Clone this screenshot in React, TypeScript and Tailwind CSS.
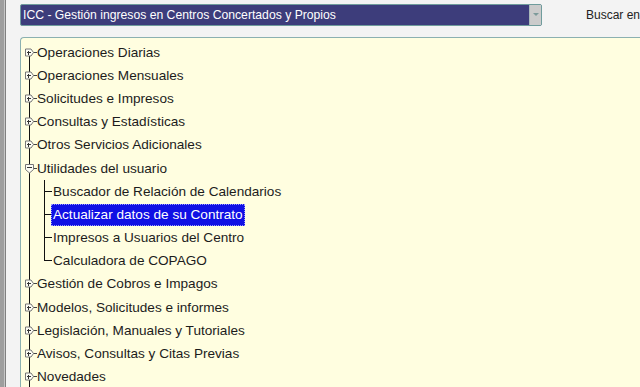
import React from "react";

type Node = { label: string; open?: boolean; children?: string[] };

const tree: Node[] = [
  { label: "Operaciones Diarias" },
  { label: "Operaciones Mensuales" },
  { label: "Solicitudes e Impresos" },
  { label: "Consultas y Estadísticas" },
  { label: "Otros Servicios Adicionales" },
  {
    label: "Utilidades del usuario",
    open: true,
    children: [
      "Buscador de Relación de Calendarios",
      "Actualizar datos de su Contrato",
      "Impresos a Usuarios del Centro",
      "Calculadora de COPAGO",
    ],
  },
  { label: "Gestión de Cobros e Impagos" },
  { label: "Modelos, Solicitudes e informes" },
  { label: "Legislación, Manuales y Tutoriales" },
  { label: "Avisos, Consultas y Citas Previas" },
  { label: "Novedades" },
];

const SELECTED = "Actualizar datos de su Contrato";

function FolderGutter({ open, first }: { open?: boolean; first?: boolean }) {
  const c = 11.5;
  return (
    <svg width="14" height="24" className="shrink-0 overflow-visible" shapeRendering="crispEdges">
      <line x1="8.5" y1={first ? c : 0} x2="8.5" y2="24" stroke="#111" />
      <line x1="12" y1={c} x2="16" y2={c} stroke="#444" />
      {open ? (
        <>
          <path d={`M4.5 ${c - 4} H12.5 V${c + 1} L8.5 ${c + 4.5} L4.5 ${c + 1} Z`} fill="#fdfdf4" stroke="#777" shapeRendering="auto" />
          <line x1="6" y1={c - 1} x2="11" y2={c - 1} stroke="#333" />
        </>
      ) : (
        <>
          <path d={`M4.5 ${c - 3.5} H10 L12.5 ${c} L10 ${c + 3.5} H4.5 Z`} fill="#fdfdf4" stroke="#777" shapeRendering="auto" />
          <line x1="5.5" y1={c} x2="10" y2={c} stroke="#333" />
          <line x1="7.5" y1={c - 2} x2="7.5" y2={c + 2.5} stroke="#333" />
        </>
      )}
    </svg>
  );
}

function LeafGutter({ last }: { last?: boolean }) {
  const c = 11.5;
  return (
    <svg width="30" height="24" className="shrink-0 overflow-visible" shapeRendering="crispEdges">
      <line x1="8.5" y1="0" x2="8.5" y2="24" stroke="#111" />
      <line x1="23.5" y1="0" x2="23.5" y2={last ? c : 24} stroke="#111" />
      <line x1="23" y1={c} x2="31" y2={c} stroke="#111" />
    </svg>
  );
}

function Label({ text }: { text: string }) {
  const sel = text === SELECTED;
  return (
    <span
      className={
        sel
          ? "px-[1px] h-[22px] leading-[20px] border border-dotted border-[#9a9aff] bg-[#1010e4] text-white whitespace-nowrap"
          : "px-[2px] leading-[22px] whitespace-nowrap"
      }
    >
      {text}
    </span>
  );
}

export default function App() {
  return (
    <div className="flex h-[387px] w-[640px] overflow-hidden bg-[#f3f3f3] font-['Liberation_Sans',Arial,sans-serif]">
      <div className="w-[4px] shrink-0 bg-[#9e9e9e]" />
      <div className="w-[1px] shrink-0 bg-[#c6c6c6]" />
      <div className="w-[1px] shrink-0 bg-[#808080]" />

      <div className="flex flex-1 flex-col pl-[14px] min-w-0">
        <div className="flex h-[37px] shrink-0 items-start">
          <div className="mt-[4px] flex h-[22px] w-[522px] shrink-0 rounded-[2px] border border-[#6f9c9c] bg-[#3d3d7b]">
            <span className="flex-1 truncate pl-[2px] text-[12.2px] leading-[20px] text-white">
              ICC - Gestión ingresos en Centros Concertados y Propios
            </span>
            <div className="flex w-[12px] items-center justify-center border-l border-[#a9b9b9] bg-[#cbcbcb]">
              <svg width="6" height="4" viewBox="0 0 6 4">
                <path d="M0 0 H6 L3 3 Z" fill="#7c9a9a" />
              </svg>
            </div>
          </div>
          <span className="ml-[44px] mt-[8px] whitespace-nowrap text-[12px] leading-[14px] text-[#222]">
            Buscar en menú
          </span>
        </div>

        <div className="flex-1 rounded-tl-[4px] border-l border-t border-[#8bb0b0] bg-[#fffee0] pt-[3px] text-[13.6px] text-[#1c1c1c]">
          {tree.map((n, i) => (
            <div key={n.label}>
              <div className="flex h-[23.2px] items-center">
                <FolderGutter open={n.open} first={i === 0} />
                <Label text={n.label} />
              </div>
              {n.open &&
                n.children?.map((ch, j) => (
                  <div key={ch} className="flex h-[23.2px] items-center">
                    <LeafGutter last={j === (n.children?.length ?? 0) - 1} />
                    <Label text={ch} />
                  </div>
                ))}
            </div>
          ))}
        </div>
      </div>
    </div>
  );
}
